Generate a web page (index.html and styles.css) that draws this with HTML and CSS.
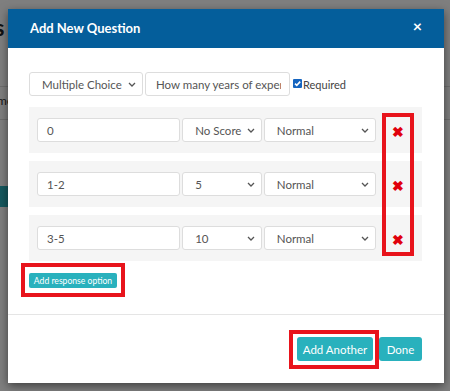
FILE: index.html
```html
<!DOCTYPE html>
<html>
<head>
<meta charset="utf-8">
<link rel="stylesheet" href="styles.css">
</head>
<body>
<div class="page">
  <div class="page-title">Questions</div>
  <div class="page-line"></div>
  <div class="page-text">Name</div>
  <div class="page-line"></div>
  <div class="page-btn">Add</div>
</div>
<div class="backdrop"></div>
<div class="modal">
  <div class="modal-header">
    <span class="modal-title">Add New Question</span>
    <span class="close">×</span>
  </div>
  <div class="modal-body">
    <div class="top-row">
      <div class="select sel-type"><span>Multiple Choice</span><svg class="chev" viewBox="0 0 8 5" width="8" height="5"><path d="M1 1l3 3 3-3" fill="none" stroke="#555" stroke-width="1.3"/></svg></div>
      <input class="input inp-question" type="text" value="How many years of experience">
      <label class="req"><span class="checkbox"><svg viewBox="0 0 9 9" width="9" height="9"><path d="M2 4.6l1.8 1.8L7.2 2.6" fill="none" stroke="#fff" stroke-width="1.6"/></svg></span>Required</label>
    </div>
    <div class="responses">
      <div class="response">
        <div class="input inp-resp">0</div>
        <div class="select sel-score"><span>No Score</span><svg class="chev" viewBox="0 0 8 5" width="8" height="5"><path d="M1 1l3 3 3-3" fill="none" stroke="#555" stroke-width="1.3"/></svg></div>
        <div class="select sel-type2"><span>Normal</span><svg class="chev" viewBox="0 0 8 5" width="8" height="5"><path d="M1 1l3 3 3-3" fill="none" stroke="#555" stroke-width="1.3"/></svg></div>
        <div class="del">✖</div>
      </div>
      <div class="response">
        <div class="input inp-resp">1-2</div>
        <div class="select sel-score"><span>5</span><svg class="chev" viewBox="0 0 8 5" width="8" height="5"><path d="M1 1l3 3 3-3" fill="none" stroke="#555" stroke-width="1.3"/></svg></div>
        <div class="select sel-type2"><span>Normal</span><svg class="chev" viewBox="0 0 8 5" width="8" height="5"><path d="M1 1l3 3 3-3" fill="none" stroke="#555" stroke-width="1.3"/></svg></div>
        <div class="del">✖</div>
      </div>
      <div class="response">
        <div class="input inp-resp">3-5</div>
        <div class="select sel-score"><span>10</span><svg class="chev" viewBox="0 0 8 5" width="8" height="5"><path d="M1 1l3 3 3-3" fill="none" stroke="#555" stroke-width="1.3"/></svg></div>
        <div class="select sel-type2"><span>Normal</span><svg class="chev" viewBox="0 0 8 5" width="8" height="5"><path d="M1 1l3 3 3-3" fill="none" stroke="#555" stroke-width="1.3"/></svg></div>
        <div class="del">✖</div>
      </div>
      <div class="hl hl-del"></div>
    </div>
    <div class="add-wrap">
      <button class="btn btn-xs">Add response option</button>
      <div class="hl hl-add"></div>
    </div>
  </div>
  <div class="modal-footer">
    <div class="another-wrap">
      <button class="btn btn-md">Add Another</button>
      <div class="hl hl-another"></div>
    </div>
    <button class="btn btn-md btn-done">Done</button>
  </div>
</div>
</body>
</html>
```

FILE: styles.css
```css
* { box-sizing: border-box; }
html, body { margin: 0; padding: 0; }
body {
  width: 450px;
  height: 391px;
  overflow: hidden;
  font-family: Lato, "Open Sans", sans-serif;
  background: #fff;
  position: relative;
}
.page { padding-top: 14px; }
.page-title { font-size: 22px; font-weight: 700; color: #222; height: 60px; margin-left: -96px; }
.page-line { height: 1px; background: #ddd; margin-top: 12px; }
.page-text { font-size: 12px; color: #333; margin-left: -18px; margin-top: 6px; height: 14px; }
.page-btn { margin-top: 66px; width: 60px; height: 21px; background: #2ab1bd; margin-left: -30px; color: #fff; font-size: 11px; line-height: 21px; }
.backdrop {
  position: absolute; inset: 0;
  background: rgba(0,0,0,0.5);
}
.modal {
  position: absolute;
  left: 8px; top: 9px;
  width: 436px; height: 374px;
  background: #fff;
  box-shadow: 0 3px 9px rgba(0,0,0,0.5);
  display: flex; flex-direction: column;
}
.modal-header {
  height: 39px;
  background: #045e9b;
  color: #fff;
  display: flex; align-items: center; justify-content: space-between;
  padding: 0 22px 1px 22px;
}
.modal-title { font-size: 13px; font-weight: 700; }
.close { font-size: 16px; font-weight: 700; line-height: 1; margin-top: -4px; margin-right: 0; }
.modal-body {
  padding: 24px 22px 0 21px;
  flex: 1;
  border-bottom: 1px solid #e5e5e5;
}
.top-row { display: flex; align-items: center; gap: 2px; height: 24px; }
.select, .input {
  height: 24px;
  border: 1px solid #ddd;
  border-radius: 3px;
  background: #fff;
  font-family: Lato, "Open Sans", sans-serif;
  font-size: 11.5px;
  color: #555;
  display: flex; align-items: center;
  white-space: nowrap; overflow: hidden;
  margin: 0;
}
.select { justify-content: space-between; padding: 0 6px 0 12px; }
.chev { flex: none; }
.input { padding: 0 9px; }
.sel-type { width: 114px; }
.inp-question { width: 145px; padding: 0 8px 0 10px; outline: none; }
.req { display: flex; align-items: center; font-size: 11px; color: #444; margin-left: 1px; }
.checkbox { width: 9px; height: 9px; background: #1565c0; border-radius: 1px; display: inline-flex; margin-right: 1px; margin-top: -2px; }
.responses { position: relative; margin-top: 11px; display: flex; flex-direction: column; gap: 8px; width: 393px; }
.response {
  height: 46px; background: #f5f5f5;
  display: flex; align-items: center; gap: 2px;
  padding: 0 8px;
}
.inp-resp { width: 144px; }
.sel-score { width: 80px; padding-left: 12px; }
.sel-type2 { width: 113px; padding-left: 12px; }
.del { width: 36px; text-align: center; color: #e0000c; font-size: 14px; font-weight: 700; padding-left: 3px; padding-top: 2px; }
.hl { position: absolute; border: 4px solid #e8141c; pointer-events: none; }
.hl-del { left: 353px; top: 6px; width: 32px; height: 143px; }
.add-wrap { position: relative; margin-top: 12px; width: 88px; }
.btn {
  border: none; background: #29b1bd; color: #fff;
  font-family: Lato, "Open Sans", sans-serif;
  border-radius: 3px; cursor: pointer; padding: 0;
  white-space: nowrap;
}
.btn-xs { height: 15px; width: 88px; font-size: 8.6px; display: block; border-radius: 2px; }
.hl-add { left: -8px; top: -10px; width: 104px; height: 34px; }
.modal-footer {
  height: 68px;
  display: flex; justify-content: flex-end; align-items: flex-start;
  padding: 22px 22px 0 0;
  gap: 6px;
}
.another-wrap { position: relative; }
.btn-md { height: 24px; font-size: 11.5px; display: block; }
.another-wrap .btn-md { width: 76px; }
.btn-done { width: 43px; }
.hl-another { left: -8px; top: -7px; width: 90px; height: 39px; }
```
